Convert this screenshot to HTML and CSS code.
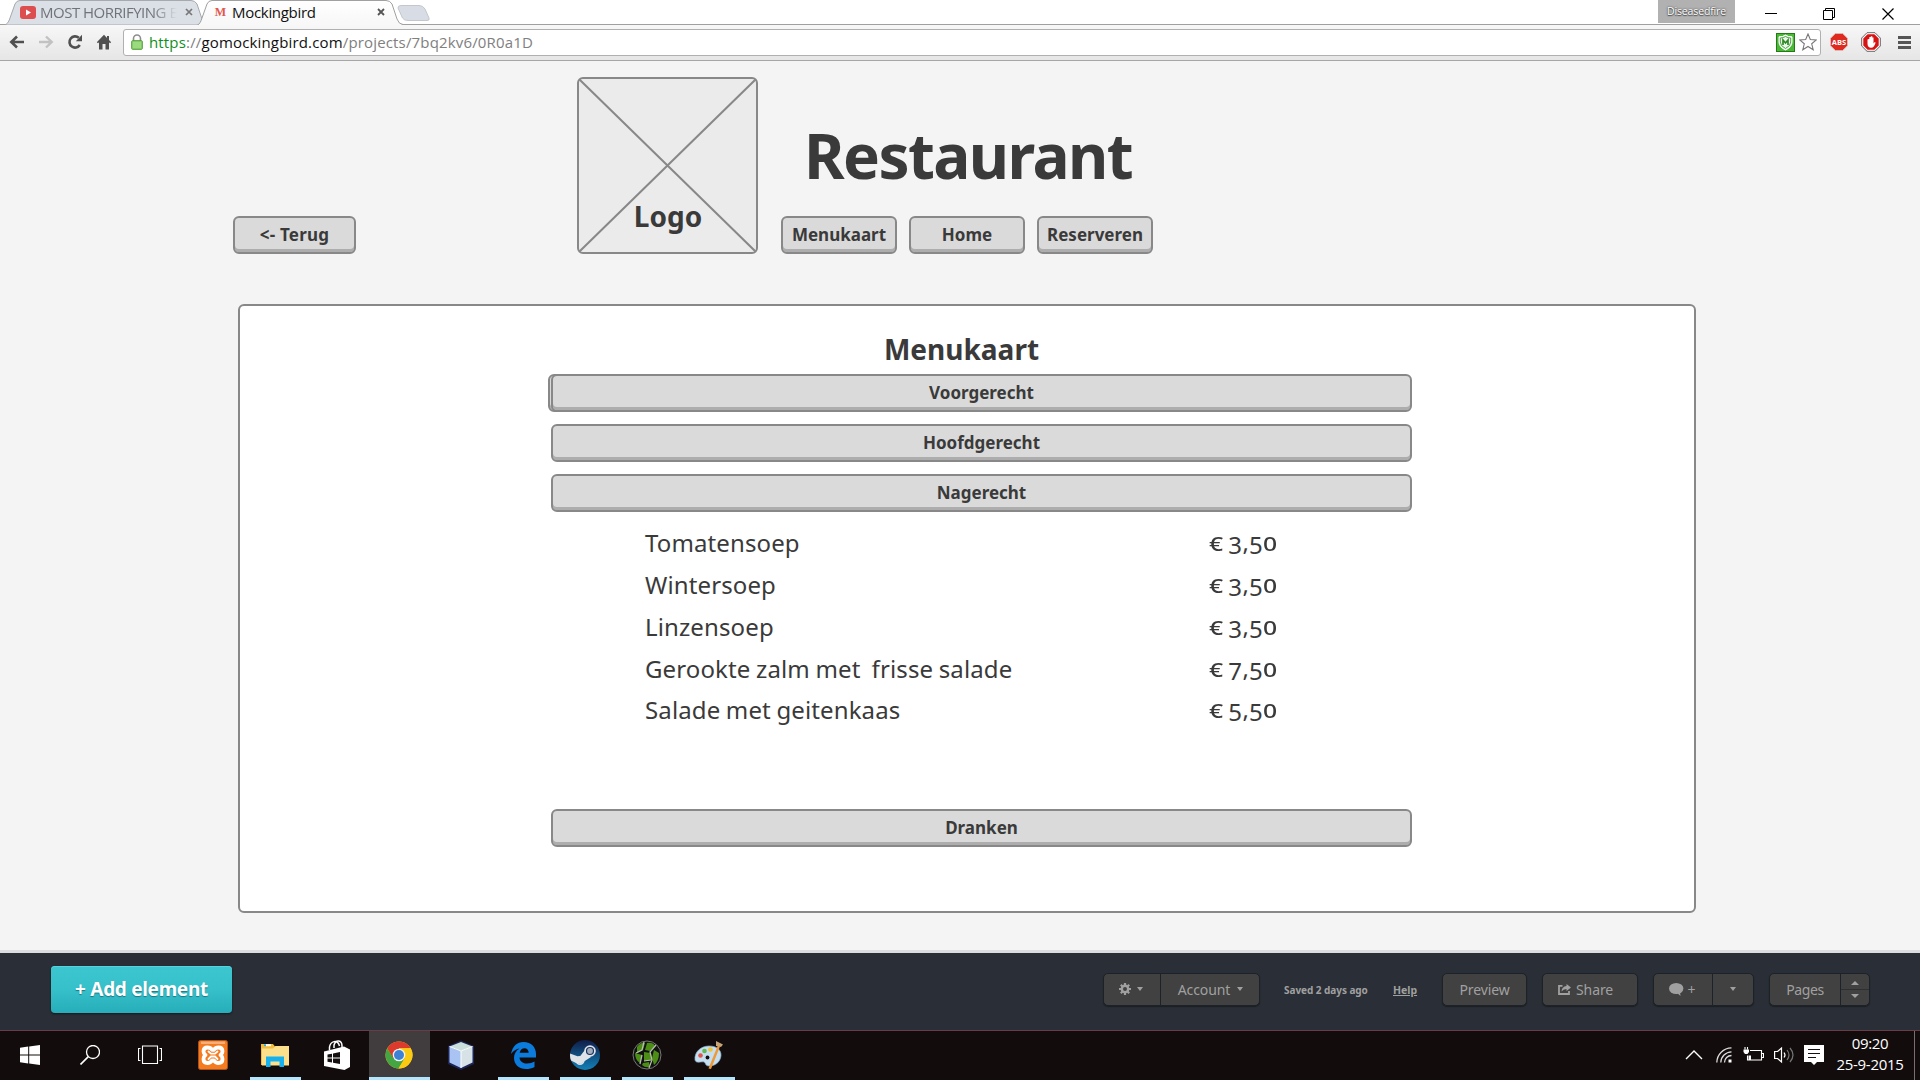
FILE: index.html
```html
<!DOCTYPE html>
<html lang="nl">
<head>
<meta charset="utf-8">
<title>Mockingbird</title>
<link rel="stylesheet" href="styles.css">
</head>
<body>
<div class="screen">
  <div class="tabstrip">
    <svg class="tab-shapes" width="440" height="25" viewBox="0 0 440 25">
      <defs><linearGradient id="act" x1="0" y1="0" x2="0" y2="1"><stop offset="0" stop-color="#fff"/><stop offset="1" stop-color="#f7f7f7"/></linearGradient></defs>
      <path d="M5.500 25C8 23 9 21 10 18L15 4Q16.500 .5 20 .5H191Q195 .5 197 4L204 25Z" fill="#dbdfe6" stroke="#a6a9ae"/>
      <path d="M398 8Q398 5.500 401 5.500H419Q423 5.500 425 9L429 18Q430 20.500 427 20.500H408Q404 20.500 402.500 18Z" fill="#d8dde5" stroke="#c3c7cd"/>
      <path d="M197 25.500C200 24 201 21 202 18L207 4Q208.500 .5 212 .5H386Q390 .5 392 4L397 19Q399 24.500 403 24.500V26H197Z" fill="url(#act)" stroke="#a0a0a0"/>
    </svg>
    <div class="tab tab-first">
      <svg width="16" height="13" viewBox="0 0 16 13"><rect width="16" height="13" rx="3" fill="#dd4f4f"/><path d="M6 3.500l5 3-5 3z" fill="#fff"/></svg>
      <span class="tab-title faded">MOST HORRIFYING E</span>
      <svg class="tab-x" width="8" height="8" viewBox="0 0 8 8"><path d="M1 1l6 6M7 1L1 7" stroke="#777" stroke-width="1.700"/></svg>
    </div>
    <div class="tab tab-second">
      <span class="fav-m">M</span>
      <span class="tab-title">Mockingbird</span>
      <svg class="tab-x" width="8" height="8" viewBox="0 0 8 8"><path d="M1 1l6 6M7 1L1 7" stroke="#555" stroke-width="1.800"/></svg>
    </div>
    <div class="window-tools">
      <span class="profile">Diseasedfire</span>
      <svg class="win-min" width="12" height="12" viewBox="0 0 12 12"><path d="M0 5.500h12" stroke="#000"/></svg>
      <svg class="win-max" width="12" height="12" viewBox="0 0 12 12"><path d="M.5 2.500h9v9h-9zM2.500 2V.5h9v9H10" fill="none" stroke="#000"/></svg>
      <svg class="win-close" width="12" height="12" viewBox="0 0 12 12"><path d="M.5.5l11 11M11.500.5l-11 11" stroke="#000" stroke-width="1.200"/></svg>
    </div>
  </div>
  <div class="toolbar">
    <svg class="nav-icon" width="16" height="16" viewBox="0 0 16 16"><path d="M15 8H3M8 2.500L2.300 8 8 13.500" fill="none" stroke="#505050" stroke-width="2.600"/></svg>
    <svg class="nav-icon" width="16" height="16" viewBox="0 0 16 16"><path d="M1 8h12M8 2.500L13.700 8 8 13.500" fill="none" stroke="#c2c2c2" stroke-width="2.400"/></svg>
    <svg class="nav-icon" width="16" height="16" viewBox="0 0 16 16"><path d="M12.800 11A5.600 5.600 0 1 1 11.800 3.800" fill="none" stroke="#505050" stroke-width="2.600"/><path d="M15 .8v6.500H8.800z" fill="#505050"/></svg>
    <svg class="nav-icon" width="16" height="16" viewBox="0 0 16 16"><path d="M8 .8L.8 8.200l1.200 1L3 8.300V15.500h3.500V10h3v5.500H13V8.300l1 .9 1.200-1L13 5.900V2h-2v2z" fill="#505050"/></svg>
    <div class="omnibox">
      <svg width="12" height="16" viewBox="0 0 12 16"><path d="M2.500 8V4.500a3.500 3.500 0 0 1 7 0V8" fill="none" stroke="#8d8d8d" stroke-width="1.600"/><rect x=".7" y="6.700" width="10.600" height="8.600" rx=".8" fill="#8fd46f" stroke="#4f9c3a"/><path d="M2 9h8M2 11h8M2 13h8" stroke="#b3e69b" stroke-width=".7"/></svg>
      <span class="url"><span class="scheme">https</span>://<span class="host">gomockingbird.com</span>/projects/7bq2kv6/0R0a1D</span>
      <svg class="ext-shield" width="19" height="19" viewBox="0 0 19 19"><rect x=".5" y=".5" width="18" height="18" fill="#4cb838" stroke="#237a17"/><path d="M9.500 2Q12 4 16 3.800V9q0 5-6.500 8Q3 14 3 9V3.800Q7 4 9.500 2z" fill="#eef7ec" stroke="#fff" stroke-width="1"/><path d="M9.500 3.500Q12 5 14.700 5V9q0 4-5.200 6.500Q4.300 13 4.300 9V5Q7 5 9.500 3.500z" fill="none" stroke="#3d9a33" stroke-width=".9"/><path d="M7 12V7l2.500 3L12 7v5" fill="none" stroke="#2f8a25" stroke-width="1.700"/></svg>
      <svg width="18" height="18" viewBox="0 0 18 18"><path d="M9 1l2.300 5.500 6 .4-4.600 3.900 1.500 5.900L9 13.500l-5.200 3.200 1.500-5.900L.7 6.900l6-.4z" fill="#fff" stroke="#777" stroke-width="1.100"/></svg>
    </div>
    <svg class="ext-abs" width="18" height="18" viewBox="0 0 18 18"><path d="M5.300.5h7.400l4.800 4.800v7.400l-4.800 4.800H5.300L.5 12.700V5.300z" fill="#e02a20" stroke="#d9b9b5"/><text x="9" y="12" text-anchor="middle" class="abs-label">ABS</text></svg>
    <svg class="ext-stop" width="20" height="20" viewBox="0 0 20 20"><path d="M6 .7h8L19.300 6v8L14 19.300H6L.7 14V6z" fill="#fff" stroke="#666"/><path d="M6.600 2.300h6.800l4.300 4.300v6.800l-4.300 4.300H6.600l-4.300-4.300V6.600z" fill="#d61414"/><path d="M6.500 7.500v4.200c0 2.500 1.500 4 3.500 4 2.500 0 3.500-1.700 4.700-5.200l-1.400-.3-.8 1.300V5.500h-1.200V4.300h-1.500v.8H8.400v1.600z" fill="#fff"/></svg>
    <svg class="burger" width="13" height="13" viewBox="0 0 13 13"><path d="M0 1.500h13M0 6.500h13M0 11.500h13" stroke="#555" stroke-width="2.800"/></svg>
  </div>

  <main class="stage">
    <header class="masthead">
      <button class="btn back">&lt;- Terug</button>
      <div class="logo">
        <svg width="177" height="173" viewBox="0 0 177 173"><path d="M0 0l177 173M177 0L0 173" stroke="#888" stroke-width="2"/></svg>
        <span class="logo-label">Logo</span>
      </div>
      <div class="brand">
        <h1>Restaurant</h1>
        <nav><button class="btn">Menukaart</button><button class="btn">Home</button><button class="btn">Reserveren</button></nav>
      </div>
    </header>
    <section class="panel">
      <h2>Menukaart</h2>
      <div class="courses">
        <div class="stacked"><span class="btn under"></span><button class="btn wide">Voorgerecht</button></div>
        <button class="btn wide">Hoofdgerecht</button>
        <button class="btn wide">Nagerecht</button>
      </div>
      <ul class="dishes">
        <li><span>Tomatensoep</span><span class="price"><span class="mid">€</span> <span class="low">3</span>,<span class="low">5</span><span class="mid">0</span></span></li>
        <li><span>Wintersoep</span><span class="price"><span class="mid">€</span> <span class="low">3</span>,<span class="low">5</span><span class="mid">0</span></span></li>
        <li><span>Linzensoep</span><span class="price"><span class="mid">€</span> <span class="low">3</span>,<span class="low">5</span><span class="mid">0</span></span></li>
        <li><span>Gerookte zalm met&nbsp; frisse salade</span><span class="price"><span class="mid">€</span> <span class="low">7</span>,<span class="low">5</span><span class="mid">0</span></span></li>
        <li><span>Salade met geitenkaas</span><span class="price"><span class="mid">€</span> <span class="low">5</span>,<span class="low">5</span><span class="mid">0</span></span></li>
      </ul>
      <button class="btn wide">Dranken</button>
    </section>
  </main>

  <footer class="editor">
    <button class="add">+ Add element</button>
    <div class="group g-account">
      <span class="seg gear"><svg width="12" height="12" viewBox="0 0 12 12"><circle cx="6" cy="6" r="3.200" fill="none" stroke="#a0a0a0" stroke-width="2.400"/><path d="M6 0v2.500M6 9.500V12M0 6h2.500M9.500 6H12M1.800 1.800l1.700 1.700M8.500 8.500l1.700 1.700M1.800 10.200l1.700-1.700M8.500 3.500l1.700-1.700" stroke="#a0a0a0" stroke-width="2.200"/></svg><i class="caret"></i></span>
      <span class="seg account">Account<i class="caret"></i></span>
    </div>
    <span class="saved">Saved 2 days ago</span>
    <a class="help">Help</a>
    <div class="group g-preview"><span class="seg">Preview</span></div>
    <div class="group g-share"><span class="seg share"><svg width="13" height="11" viewBox="0 0 13 11"><path d="M4.500 1.800H1V10h10V7" fill="none" stroke="#a0a0a0" stroke-width="1.800"/><path d="M8.500 0L13 3.500 8.500 7V5Q5.500 4.800 3.500 7.500 3.800 2.500 8.500 2z" fill="#a0a0a0"/></svg><span>Share</span></span></div>
    <div class="group g-comment">
      <span class="seg comment"><svg width="15" height="13" viewBox="0 0 15 13"><ellipse cx="7.200" cy="5.500" rx="7.200" ry="5.500" fill="#a0a0a0"/><path d="M7 9l4.500 4-.5-4z" fill="#a0a0a0"/></svg><span class="plus">+</span></span>
      <span class="seg drop"><i class="caret"></i></span>
    </div>
    <div class="group g-pages">
      <span class="seg pages">Pages</span>
      <span class="stepper"><span><i class="caret up"></i></span><span><i class="caret down"></i></span></span>
    </div>
  </footer>

  <div class="taskbar">
    <div class="sys">
      <span><svg width="20" height="20" viewBox="0 0 20 20"><path d="M0 2.800L8.200 1.600v7.900H0zM9.200 1.500L20 0v9.500H9.200zM0 10.500h8.200v7.900L0 17.200zM9.200 10.500H20V20L9.200 18.500z" fill="#fff"/></svg></span>
      <span><svg width="20" height="20" viewBox="0 0 20 20"><circle cx="13" cy="7" r="6.500" fill="none" stroke="#fff" stroke-width="1.300"/><path d="M8.300 11.600L.5 19.500" stroke="#fff" stroke-width="1.600"/></svg></span>
      <span><svg width="24" height="20" viewBox="0 0 24 20"><path d="M4.500 1h15v17.500h-15zM2.500 3.500H.5v12h2M21.500 3.500h2v12h-2" fill="none" stroke="#fff" stroke-width="1.100"/></svg></span>
    </div>
    <div class="apps">
      <span class="app"><svg width="30" height="30" viewBox="0 0 30 30"><rect x=".5" y=".5" width="29" height="29" rx="2" fill="#f47b20" stroke="#a9531c"/><path d="M3 1.500h24v2.500H3z" fill="#f8ae76"/><path d="M9.500 7.500C6.500 7.500 5.500 9.500 5.500 11.500Q5.500 13.500 7.500 15 5.500 16.500 5.500 19 5.500 23 9.500 23 12.500 23 14 20.500h2Q17.500 23 20.500 23 24.500 23 24.500 19 24.500 16.500 22.500 15 24.500 13.500 24.500 11.500 24.500 7.500 20.500 7.500 17.500 7.500 16 9.800h-2Q12.500 7.500 9.500 7.500z" fill="none" stroke="#fff" stroke-width="3.800" stroke-linejoin="round"/><path d="M10.500 11.500l2.500 2.200h4l2.500-2.200M10.500 19l2.500-2.500h4l2.500 2.500" fill="none" stroke="#fff" stroke-width="1.800" stroke-linecap="round"/></svg></span>
      <span class="app open"><svg width="28" height="24" viewBox="0 0 28 24"><path d="M0 1h12l2 2.500h13V22H0z" fill="#f3bd3b"/><path d="M3 1.200h7v2H3z" fill="#fff"/><path d="M3 1.200h2v2H3z" fill="#2aa7e0"/><path d="M1 5.500h11L14.500 3H28v19.500H1z" fill="#fde08c"/><path d="M5 24V13.500h18V24h-4.500v-5.500h-9V24z" fill="#18b1ef"/></svg></span>
      <span class="app"><svg width="26" height="30" viewBox="0 0 26 30"><path d="M5.500 10V7c1-6 8-8 10-1M10 8V5c2-6 8-5 8 1v3" fill="none" stroke="#fff" stroke-width="1.500"/><path d="M0 11.500L20 6.500 26 9.500V27l-5.500 3L0 26z" fill="#fff"/><path d="M3.500 14.500l4.500-.8V17.500H3.500zM9 13.500l7-1.500v5.500H9zM3.500 18.500H8v4l-4.500-.7zM9 18.500h7v5.500l-7-1.300z" fill="#15100f"/></svg></span>
      <span class="app open current"><svg width="28" height="28" viewBox="0 0 28 28"><circle cx="14" cy="14" r="13.500" fill="#fbcb14"/><path d="M14 14L8 17.500 2.300 7.300A13.500 13.500 0 0 1 25.700 7.300H14z" fill="#dc3a2c"/><path d="M2.300 7.300A13.500 13.500 0 0 0 13.500 27.500L19.500 17.500 14 14 8.200 17z" fill="#43a643"/><path d="M14 7.300h11.700A13.500 13.500 0 0 1 13.500 27.500L20 17z" fill="#fbcb14"/><circle cx="14" cy="14" r="6.300" fill="#f3f3f3"/><circle cx="14" cy="14" r="5" fill="#3e82d6"/></svg></span>
      <span class="app"><svg width="30" height="30" viewBox="0 0 30 30"><path d="M15 .5L28 6v18l-13 6L2 24V6z" fill="#1d2458"/><path d="M15 2l11.500 4.500L15 11 3.500 6.500z" fill="#c9dfdb"/><path d="M3.500 6.500L15 11v17L3.500 22.500z" fill="#a9c3f2"/><path d="M26.500 6.500L15 11v17l11.500-5.500z" fill="#d6e2e6"/><path d="M3.500 6.500L15 11v17M15 11l11.500-4.500" fill="none" stroke="#fff"/></svg></span>
      <span class="app open"><svg width="25" height="27" viewBox="0 0 25 27"><path d="M0 12C1.500 4 6 0 12.500 0 20.500 0 25 5.500 25 12v3.500H8.500c.3 4 3.800 6 7.500 6 3 0 5.500-.8 7.500-2V25c-2.500 1.400-5.500 2-8.500 2C8 27 3 22.500 3 16c0-4 2-7.500 5.500-9.500C5.500 7 2.500 8.500 0 12zM8.700 10.800h9C17.700 8 16 6.200 13.500 6.200S9 8 8.700 10.800z" fill="#0b7bdc"/></svg></span>
      <span class="app open"><svg width="30" height="30" viewBox="0 0 30 30"><defs><linearGradient id="st" x1="0" y1="0" x2="0" y2="1"><stop offset="0" stop-color="#101d48"/><stop offset="1" stop-color="#1381b8"/></linearGradient><clipPath id="sc"><circle cx="15" cy="15" r="15"/></clipPath></defs><circle cx="15" cy="15" r="15" fill="url(#st)"/><g clip-path="url(#sc)"><path d="M0 13.500l9.500 3.500 5-6.500L21 17l-7 4.500L11 24l-5-1-6-3z" fill="#dfe3e8"/><circle cx="10" cy="20.500" r="3.800" fill="none" stroke="#dfe3e8" stroke-width="1.500"/><circle cx="20" cy="11" r="5.800" fill="#dfe3e8"/><circle cx="20" cy="11" r="3.500" fill="#a5adba" stroke="#1c3464" stroke-width="1.200"/></g></svg></span>
      <span class="app open"><svg width="30" height="30" viewBox="0 0 30 30"><circle cx="15" cy="15" r="14" fill="#111" stroke="#777" stroke-width="1"/><path d="M5 7q4-5 8-4l-2 7-6 3zM15 3q6-1 8 3l-5 5-5-1zM3 13l7 2-2 8q-5-3-5-10zM12 12l7 1 1 7-8 1zM22 10l5 3q0 8-5 12l-2-7zM11 23l6-1 1 5q-5 1-8-2z" fill="#4b8d15"/><path d="M12 2l-2 8-6 3M24 5l-6 7 2 8-3 8M10 15l-2 9M12 21l7-1" fill="none" stroke="#b9beb5" stroke-width="1.200"/></svg></span>
      <span class="app open"><svg width="30" height="30" viewBox="0 0 30 30"><path d="M1 20C0 12 7 6 15 6s12 4 12 9-4 11-12 11c-4 0-3-3-5-4s-8 2-9-2z" fill="#c5def0" stroke="#89aec9" stroke-width=".7"/><circle cx="6.500" cy="15.500" r="2.300" fill="#df5548"/><circle cx="10.500" cy="11" r="2.300" fill="#64b84d"/><circle cx="16.500" cy="9.500" r="2.300" fill="#f2c431"/><circle cx="13.500" cy="17.500" r="1.900" fill="#15100f"/><path d="M24 5l2 1.500L17 29l-2.500-.5z" fill="#ee9836"/><path d="M22 1l7 3.500-2 2.500q-3-1-5-1z" fill="#c6a478"/></svg></span>
    </div>
    <div class="tray">
      <svg width="18" height="10" viewBox="0 0 18 10"><path d="M1 9l8-8 8 8" fill="none" stroke="#fff" stroke-width="1.400"/></svg>
      <svg class="wifi" width="16" height="16" viewBox="0 0 16 16"><path d="M.8 15.500A15 15 0 0 1 15.500.8M4.800 15.500A11 11 0 0 1 15.500 4.800M8.500 15.500a7 7 0 0 1 7-7" fill="none" stroke="#ddd" stroke-width="1.300"/><path d="M12.500 12.500h3v3h-3z" fill="#fff"/></svg>
      <svg class="battery" width="21" height="16" viewBox="0 0 21 16"><path d="M7 3.500h11.500v9.500h-14V8.500M19 6.500h1.500v4H19M2 0v2.500M4.500 0v2.500" fill="none" stroke="#fff" stroke-width="1.100"/><path d="M.5 2.500h5.500v2.500L4.500 7H2L.5 5zM5.500 8.500H8V13H5.500z" fill="#fff"/></svg>
      <svg class="speaker" width="21" height="18" viewBox="0 0 21 18"><path d="M.6 5.500h3L7.500 2v14l-3.900-3.500h-3z" fill="none" stroke="#fff" stroke-width="1.200"/><path d="M10 6.500q2 2.500 0 5" fill="none" stroke="#fff" stroke-width="1.200"/><path d="M13 4q4 5 0 10M16 2q6 7 0 14" fill="none" stroke="#777" stroke-width="1.200"/></svg>
      <svg class="note" width="20" height="20" viewBox="0 0 20 20"><path d="M0 0h20v17h-7l-3 3-3-3H0z" fill="#fff"/><path d="M4 4.500h12M4 8.500h12M4 12.500h8" stroke="#15100f" stroke-width="1.200"/></svg>
      <div class="clock"><span>09:20</span><span>25-9-2015</span></div>
    </div>
  </div>
</div>
</body>
</html>
```
FILE: styles.css
```css
* { box-sizing: border-box; }
body { margin: 0; font-family: "Noto Sans", sans-serif; color: #3a3a3a; overflow: hidden; }
button { font: inherit; color: inherit; padding: 0; }
svg { display: block; flex: none; }
h1, h2, ul { margin: 0; padding: 0; }
.screen { width: 1920px; height: 1080px; display: flex; flex-direction: column; background: #f4f4f4; }

/* browser chrome */
.tabstrip { position: relative; height: 25px; flex: none; display: flex; align-items: flex-start; background: #fff; border-bottom: 1px solid #a0a0a0; font: 15px/24px "Open Sans", sans-serif; }
.tab-shapes { position: absolute; left: 0; top: 0; }
.tab { position: relative; display: flex; align-items: center; height: 24px; }
.tab-first { width: 193px; padding-left: 20px; gap: 4px; }
.tab-second { width: 172px; margin-left: 20px; gap: 4px; }
.tab-title { letter-spacing: -.3px; color: #111; white-space: nowrap; }
.tab-title.faded { color: #707378; letter-spacing: -.5px; -webkit-mask-image: linear-gradient(90deg, #000 82%, transparent); mask-image: linear-gradient(90deg, #000 82%, transparent); }
.tab-x { margin-left: auto; }
.fav-m { width: 15px; text-align: center; font: bold 12px/20px "Liberation Serif", serif; color: #e2564c; }
.window-tools { margin-left: auto; display: flex; padding-right: 26px; }
.profile { width: 77px; height: 23px; background: #b1b1b1; color: #fff; font-size: 10.5px; line-height: 22px; letter-spacing: -.15px; text-align: center; text-shadow: 0 0 2px #333, 0 1px 1px #555; }
.win-min { margin: 8px 0 0 30px; }
.win-max { margin: 8px 0 0 46px; }
.win-close { margin: 8px 0 0 47px; }
.toolbar { height: 36px; flex: none; display: flex; align-items: center; padding: 0 0 1px 9px; background: linear-gradient(#f7f7f7, #e6e6e6); border-bottom: 1px solid #a6a6a6; }
.nav-icon { margin-right: 13px; }
.nav-icon:nth-child(4) { margin-right: 11px; }
.omnibox { width: 1698px; height: 27px; display: flex; align-items: center; padding: 0 3px 0 7px; background: #fff; border: 1px solid #b0b0b0; border-radius: 3px; }
.url { margin-left: 6px; font: 15px/24px "Open Sans", sans-serif; letter-spacing: .16px; color: #808080; }
.scheme { color: #0f8f1d; }
.host { color: #111; }
.ext-shield { margin-left: auto; margin-right: 4px; }
.ext-abs { margin-left: 9px; }
.abs-label { font: bold 7.500px "Open Sans", sans-serif; fill: #fff; }
.ext-stop { margin-left: 13px; }
.burger { margin-left: 17px; }

/* wireframe page */
.stage { height: 889px; flex: none; }
.masthead { height: 193px; display: flex; align-items: flex-end; padding-left: 233px; }
.btn { display: block; width: 116px; height: 38px; border: 2px solid #888; border-radius: 6px; background: #dadada; box-shadow: inset 0 -3px #adadad; font-size: 17px; line-height: 32px; padding-bottom: 1px; font-weight: 700; text-align: center; white-space: nowrap; }
.btn.back { width: 123px; letter-spacing: .2px; }
.logo { position: relative; width: 181px; height: 177px; margin-left: 221px; border: 2px solid #888; border-radius: 6px; background: #ebebeb; }
.logo-label { position: absolute; left: 1px; right: 0; top: 117px; text-align: center; font-size: 28px; line-height: 40px; font-weight: 700; }
.brand { margin-left: 23px; }
.brand h1 { padding: 1px 0 0 23px; margin-bottom: 26px; font-size: 62px; line-height: 70px; letter-spacing: -1.600px; }
.brand nav { display: flex; gap: 12px; }
.panel { width: 1458px; height: 609px; margin: 50px 0 0 238px; padding: 24px 282px 0 311px; border: 2px solid #888; border-radius: 6px; background: #fff; }
.panel h2 { margin: 0 40px 6px 0; text-align: center; font-size: 28px; line-height: 38px; }
.courses { display: flex; flex-direction: column; gap: 12px; }
.stacked { position: relative; }
.stacked .btn.wide { position: relative; }
.btn.wide { width: 861px; }
.btn.under { position: absolute; left: -3px; top: 0; width: 40px; }
.dishes { list-style: none; margin: 10px 0 78px; padding-left: 94px; font-size: 24px; line-height: 42px; letter-spacing: .12px; word-spacing: -.8px; }
.dishes li { height: 42px; display: flex; }
.dishes li:last-child { height: 41px; line-height: 40px; }
.dishes li > span:first-child { width: 564px; }
.price { white-space: pre; letter-spacing: 0; word-spacing: -1px; }
.mid { display: inline-block; width: 14px; font-size: 19px; line-height: 20px; font-weight: 500; transform: scaleX(1.3); transform-origin: left; }
.low { vertical-align: -3px; line-height: 20px; letter-spacing: .5px; }
.price { margin-top: -1px; }

/* editor bar */
.editor { height: 80px; flex: none; display: flex; align-items: flex-start; padding: 13px 0 0 51px; border-top: 3px solid #dcdedd; background: #2a2e36; color: #a0a0a0; font-size: 14px; }
.add { width: 181px; height: 47px; border: 0; border-radius: 4px; background: linear-gradient(#3bc6d0, #36c0ca 50%, #26adb9); box-shadow: 0 1px 2px #14181c, inset 0 1px #56d3db; color: #fff; font-size: 19px; line-height: 46px; padding-bottom: 1px; font-weight: 700; letter-spacing: -.3px; text-shadow: 0 1px 1px #1a7780; }
.group { display: flex; height: 33px; margin-top: 7px; border: 1px solid #1d2228; border-radius: 5px; background: #414141; box-shadow: 0 1px 1px #1b1f24; overflow: hidden; }
.seg { display: flex; align-items: center; justify-content: center; flex: 1; line-height: 29px; padding-bottom: 1px; letter-spacing: -.1px; }
.seg + .seg, .stepper { border-left: 1px solid #1d2228; }
.caret { width: 0; height: 0; border: 3px solid transparent; border-bottom: 0; border-top: 4px solid #a0a0a0; }
.g-account { width: 157px; margin-left: 871px; }
.gear { flex: 0 0 56px; gap: 6px; padding-right: 2px; }
.account { gap: 7px; padding-left: 1px; }
.saved { margin: 14px 0 0 24px; width: 109px; font-size: 10px; line-height: 20px; font-weight: 700; letter-spacing: -.05px; white-space: nowrap; }
.help { margin-top: 14px; width: 49px; font-size: 10.500px; line-height: 20px; font-weight: 700; text-decoration: underline; }
.g-preview { width: 85px; }
.g-share { width: 96px; margin-left: 15px; }
.share { gap: 5px; justify-content: flex-start; padding-left: 15px; }
.share span { padding-top: 1px; }
.g-comment { width: 101px; margin-left: 15px; }
.comment { flex: 0 0 58px; gap: 4px; padding-right: 2px; }
.plus { padding-top: 1px; }
.g-pages { width: 101px; margin-left: 15px; }
.pages { flex: 0 0 70px; letter-spacing: -.4px; }
.stepper { flex: 1; display: flex; flex-direction: column; }
.stepper span { flex: 1; display: flex; align-items: center; justify-content: center; }
.stepper span + span { border-top: 1px solid #2e2f31; padding-bottom: 3px; }
.stepper span:first-child { padding-top: 3px; }
.caret.up { border: 4px solid transparent; border-top: 0; border-bottom: 4px solid #a0a0a0; }
.caret.down { border-left-width: 4px; border-right-width: 4px; }

/* desktop taskbar */
.taskbar { height: 50px; flex: none; display: flex; background: #120c0d; border-top: 1px solid #6b3b47; }
.sys { display: flex; width: 182px; height: 48px; }
.sys span { width: 60px; display: flex; align-items: center; justify-content: center; }
.apps { display: flex; }
.app { position: relative; width: 62px; height: 49px; padding-bottom: 1px; display: flex; align-items: center; justify-content: center; }
.app.open::after { content: ""; position: absolute; left: 6px; right: 5px; bottom: 0; height: 3px; background: #b3e5fc; }
.app.current { width: 61px; margin-left: 1px; padding-right: 2px; background: #413c3d; }
.app.current::after { left: 0; right: 0; }
.tray { margin-left: auto; display: flex; align-items: center; width: 235px; height: 48px; color: #fff; }
.wifi { margin-left: 13px; }
.battery { margin-left: 11px; }
.speaker { margin-left: 10px; }
.note { margin-left: 9px; }
.clock { width: 91px; height: 49px; display: flex; flex-direction: column; align-self: flex-start; padding: 2px 0 0 2px; border-right: 1px solid #77706f; font: 15px/21px "Open Sans", sans-serif; letter-spacing: -.3px; text-align: center; }
```
